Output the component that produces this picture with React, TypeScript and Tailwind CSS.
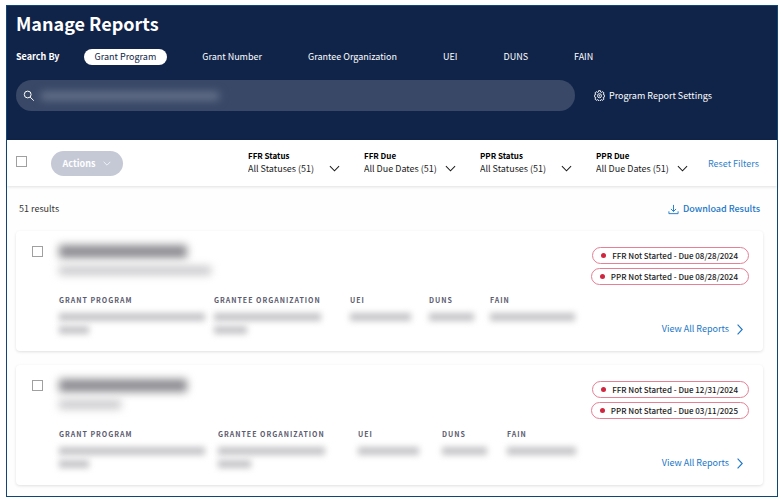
import React, { useState } from "react";
import { clsx } from "clsx";

interface Field {
  label: string;
  // one bar per line of hidden text
  bars: string[];
}

interface Report {
  id: string;
  subtitle: string;
  columns: string;
  fields: Field[];
  statuses: string[];
}

const SEARCH_TYPES = ["Grant Program", "Grant Number", "Grantee Organization", "UEI", "DUNS", "FAIN"];

const FILTERS = [
  { id: "ffr-status", label: "FFR Status", value: "All Statuses (51)" },
  { id: "ffr-due", label: "FFR Due", value: "All Due Dates (51)" },
  { id: "ppr-status", label: "PPR Status", value: "All Statuses (51)" },
  { id: "ppr-due", label: "PPR Due", value: "All Due Dates (51)" },
];

const REPORTS: Report[] = [
  {
    id: "report-1",
    subtitle: "w-[152px]",
    columns: "grid-cols-[155px_136px_79px_61px_90px]",
    fields: [
      { label: "Grant Program", bars: ["w-[146px]", "w-[30px]"] },
      { label: "Grantee Organization", bars: ["w-[107px]", "w-[33px]"] },
      { label: "UEI", bars: ["w-[61px]"] },
      { label: "DUNS", bars: ["w-[45px]"] },
      { label: "FAIN", bars: ["w-[85px]"] },
    ],
    statuses: ["FFR Not Started - Due 08/28/2024", "PPR Not Started - Due 08/28/2024"],
  },
  {
    id: "report-2",
    subtitle: "w-[62px]",
    columns: "grid-cols-[159px_140px_84px_65px_73px]",
    fields: [
      { label: "Grant Program", bars: ["w-[146px]", "w-[30px]"] },
      { label: "Grantee Organization", bars: ["w-[107px]", "w-[33px]"] },
      { label: "UEI", bars: ["w-[61px]"] },
      { label: "DUNS", bars: ["w-[45px]"] },
      { label: "FAIN", bars: ["w-[69px]"] },
    ],
    statuses: ["FFR Not Started - Due 12/31/2024", "PPR Not Started - Due 03/11/2025"],
  },
];

const SearchIcon = () => (
  <svg className="w-3 h-3 shrink-0" viewBox="0 0 12 12" fill="none" stroke="currentColor" strokeWidth="1">
    <circle cx="4.7" cy="4.5" r="3.4" />
    <path d="M7.1 7 10.8 10.7" />
  </svg>
);

const GearIcon = () => (
  <svg className="w-[11px] h-[11px] shrink-0" viewBox="0 0 24 24" fill="none" stroke="currentColor" strokeWidth="2">
    <path d="M10 1.5h4l.6 3 1.9.8 2.6-1.7 2.8 2.8-1.7 2.6.8 1.9 3 .6v3l-3 .8-.8 1.9 1.7 2.6-2.8 2.8-2.6-1.7-1.9.8-.6 2.8h-4l-.6-2.8-1.9-.8-2.6 1.7-2.8-2.8 1.7-2.6-.8-1.9-3-.8v-3l3-.6.8-1.9-1.7-2.6 2.8-2.8 2.6 1.7 1.9-.8z" />
    <circle cx="12" cy="12.5" r="4.4" />
    <circle cx="12" cy="12.5" r="1" />
  </svg>
);

const DownloadIcon = () => (
  <svg className="w-[11px] h-[11px] shrink-0" viewBox="0 0 12 12" fill="none" stroke="currentColor" strokeWidth="1">
    <path d="M6 1v7M3.2 5.4 6 8.2l2.8-2.8M1 8v2.5h10V8" />
  </svg>
);

const ChevronDown = ({ className }: { className?: string }) => (
  <svg className={clsx("shrink-0", className)} viewBox="0 0 12 7" fill="none" stroke="currentColor" strokeWidth="1.1">
    <path d="M1 1l5 5 5-5" />
  </svg>
);

const ChevronRight = () => (
  <svg className="w-[6px] h-[11px] shrink-0" viewBox="0 0 6 11" fill="none" stroke="currentColor" strokeWidth="1.1">
    <path d="M.6.6l4.6 4.9L.6 10.4" />
  </svg>
);

const ReportCard: React.FC<{ report: Report }> = ({ report }) => (
  <article className="bg-white rounded-sm shadow-[0_1px_3px_rgba(0,0,0,0.12)] h-[120px] pl-4 pr-[14px] flex">
    <input
      type="checkbox"
      aria-label="Select report"
      className="appearance-none w-[11px] h-[11px] mt-[15px] border border-[#a0a0a0] bg-white shrink-0"
    />

    {/* Report details */}
    <div className="flex-1 min-w-0 pl-4 pt-[14px]">
      <div className="w-[128px] h-[13px] bg-[#8c8c91] blur-[4px]" />
      <div className={clsx("h-[9px] mt-2 bg-[#c9c9cc] blur-[4px]", report.subtitle)} />
      <dl className={clsx("grid mt-[19px]", report.columns)}>
        {report.fields.map((field) => (
          <div key={field.label}>
            <dt className="text-[7px] leading-3 font-bold tracking-[1px] uppercase whitespace-nowrap text-[#5b5b70]">
              {field.label}
            </dt>
            <dd className="flex flex-col gap-[5px] mt-[7px]">
              {field.bars.map((bar, i) => (
                <span key={i} className={clsx("block h-2 bg-[#c4c4c7] blur-[3px]", bar)} />
              ))}
            </dd>
          </div>
        ))}
      </dl>
    </div>

    {/* Statuses and link */}
    <div className="flex flex-col items-end pt-4 shrink-0">
      <ul className="flex flex-col items-end gap-1">
        {report.statuses.map((status) => (
          <li
            key={status}
            className="flex items-center h-[17px] pl-2 pr-[10px] gap-[6px] border border-[#e58095] rounded-full text-[8px] leading-3 font-medium text-[#1b1b1b] whitespace-nowrap"
          >
            <span className="w-[5px] h-[5px] rounded-full bg-[#d0263f]" />
            {status}
          </li>
        ))}
      </ul>
      <a href="#" className="flex items-center gap-2 mt-9 mr-[6px] text-[9px] leading-4 text-[#1a76c7]">
        View All Reports
        <ChevronRight />
      </a>
    </div>
  </article>
);

export default function App() {
  const [searchBy, setSearchBy] = useState("Grant Program");

  return (
    <div className="bg-white pt-[5px] pl-[6px] pr-[3px] pb-1 font-['Noto_Sans_CJK_SC','Noto_Sans',sans-serif]">
      <div className="border border-[#0f4675] bg-[#fefefe]">
        {/* Header */}
        <header className="bg-[#10244a] text-white h-[134px] px-[9px] pt-[3px]">
          <h1 className="text-[18px] leading-7 font-bold">Manage Reports</h1>

          <div className="flex items-center gap-6 mt-3 text-[9px] leading-4">
            <span className="font-bold">Search By</span>
            {SEARCH_TYPES.map((type) => (
              <button
                key={type}
                onClick={() => setSearchBy(type)}
                className={clsx(
                  "px-[11px] rounded-full whitespace-nowrap",
                  type === searchBy ? "bg-white text-[#10244a]" : "text-white"
                )}
              >
                {type}
              </button>
            ))}
          </div>

          <div className="flex items-center gap-[19px] mt-[15px] text-[9px] leading-4">
            <label className="flex items-center flex-1 max-w-[559px] h-[31px] pl-[7px] pr-4 rounded-full bg-[#384866]">
              <SearchIcon />
              <span className="w-[178px] h-2 ml-[6px] bg-[#69758f] blur-[4px]" />
              <input type="text" aria-label="Search grant program" className="flex-1 min-w-0 outline-none" />
            </label>
            <button className="flex items-center gap-1 whitespace-nowrap">
              <GearIcon />
              Program Report Settings
            </button>
          </div>
        </header>

        {/* Filters */}
        <div className="flex items-center h-[46px] pl-[9px] pr-[18px] bg-white shadow-[0_1px_3px_rgba(0,0,0,0.12)] text-[9px] leading-[13px]">
          <input
            type="checkbox"
            aria-label="Select all reports"
            className="appearance-none w-[11px] h-[11px] mb-1 border border-[#a0a0a0] bg-white shrink-0"
          />
          <button className="flex items-center justify-center gap-2 w-[72px] h-[25px] ml-6 rounded-full bg-[#c5c9d6] text-white font-bold">
            Actions
            <ChevronDown className="w-2 h-[5px]" />
          </button>
          <div className="flex gap-6 ml-auto mb-[2px]">
            {FILTERS.map((filter) => (
              <div key={filter.id} className="w-[92px]">
                <label htmlFor={filter.id} className="block font-bold text-black text-[8px]">
                  {filter.label}
                </label>
                <div className="flex items-center text-[#1b1b1b]">
                  <select id={filter.id} className="appearance-none flex-1 min-w-0 outline-none">
                    <option>{filter.value}</option>
                  </select>
                  <ChevronDown className="w-[11px] h-[7px]" />
                </div>
              </div>
            ))}
          </div>
          <button className="ml-5 text-[#2f7fc8] whitespace-nowrap">Reset Filters</button>
        </div>

        {/* Results */}
        <main className="pl-[9px] pr-[14px] pb-[11px]">
          <div className="flex items-center justify-between h-[45px] pt-px pl-[3px] pr-[3px] text-[9px] leading-4">
            <p className="text-[#333]">51 results</p>
            <button className="flex items-center gap-1 font-medium text-[#1a76c7]">
              <DownloadIcon />
              Download Results
            </button>
          </div>
          <div className="flex flex-col gap-[14px]">
            {REPORTS.map((report) => (
              <ReportCard key={report.id} report={report} />
            ))}
          </div>
        </main>
      </div>
    </div>
  );
}
